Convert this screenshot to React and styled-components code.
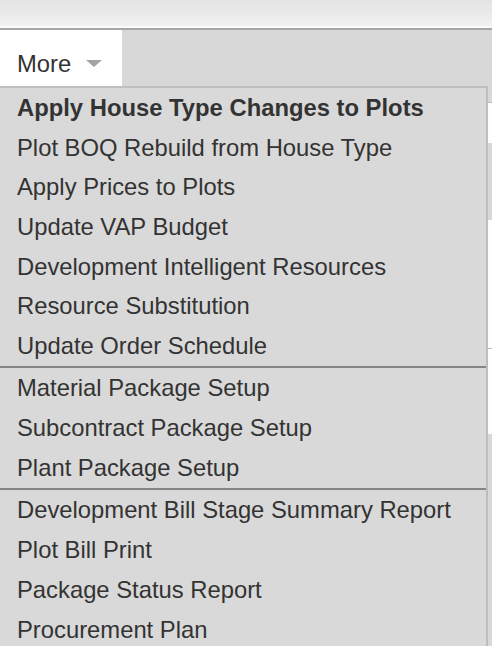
import styled, { createGlobalStyle } from "styled-components";

const GlobalStyle = createGlobalStyle`
  html, body {
    margin: 0;
    padding: 0;
    background: #d8d8d8;
    font-family: "Liberation Sans", Arial, Helvetica, sans-serif;
    overflow: hidden;
  }
`;

const Page = styled.div`
  width: 492px;
  height: 646px;
  overflow: hidden;
  background: #d8d8d8;
`;

const TopBar = styled.div`
  height: 26px;
  background: linear-gradient(#e3e3e3, #f1f1f1);
  border-bottom: 2px solid #fbfbfb;
`;

const TabStrip = styled.div`
  display: flex;
  height: 56px;
  border-top: 2px solid #a6a6a6;
  background: #d8d8d8;
`;

const Tab = styled.div`
  display: flex;
  align-items: center;
  gap: 15px;
  width: 122px;
  box-sizing: border-box;
  padding: 12px 0 0 17px;
  background: #fff;
  color: #333;
  font-size: 23.8px;
`;

const Caret = styled.span`
  width: 0;
  height: 0;
  border-left: 8px solid transparent;
  border-right: 8px solid transparent;
  border-top: 7px solid #a3a3a3;
  margin-top: -2px;
`;

const Content = styled.div`
  position: relative;
  height: 560px;
`;

const Row = styled.div`
  height: ${(p) => p.h}px;
  background: ${(p) => (p.white ? "#fdfdfd" : "#d8d8d8")};
  border-top: ${(p) => (p.line ? "1px solid #bcbcbc" : "none")};
`;

const Menu = styled.div`
  position: absolute;
  top: 0;
  left: 0;
  width: 486px;
  background: #d9d9d9;
  border-top: 2px solid #bfbfbf;
  border-right: 2px solid #bdbdbd;
`;

const Group = styled.div`
  & + & {
    border-top: 2px solid #858585;
  }
`;

const Item = styled.div`
  height: ${(p) => p.h || 40}px;
  line-height: ${(p) => p.h || 40}px;
  padding-left: 17px;
  color: #333;
  font-size: 23.8px;
  font-weight: ${(p) => (p.bold ? 700 : 400)};
  white-space: nowrap;
`;

const groups = [
  [
    "Apply House Type Changes to Plots",
    "Plot BOQ Rebuild from House Type",
    "Apply Prices to Plots",
    "Update VAP Budget",
    "Development Intelligent Resources",
    "Resource Substitution",
    "Update Order Schedule",
  ],
  ["Material Package Setup", "Subcontract Package Setup", "Plant Package Setup"],
  [
    "Development Bill Stage Summary Report",
    "Plot Bill Print",
    "Package Status Report",
    "Procurement Plan",
  ],
];

export default function App() {
  return (
    <Page>
      <GlobalStyle />
      <TopBar />
      <TabStrip>
        <Tab>
          More
          <Caret />
        </Tab>
      </TabStrip>
      <Content>
        <Row h={16} />
        <Row h={40} white line />
        <Row h={77} />
        <Row h={128} white />
        <Row h={85} white line />
        <Row h={200} />
        <Menu>
          {groups.map((g, gi) => (
            <Group key={gi}>
              {g.map((label, i) => (
                <Item key={label} bold={gi === 0 && i === 0} h={gi === 0 ? 39.7 : 40}>
                  {label}
                </Item>
              ))}
            </Group>
          ))}
        </Menu>
      </Content>
    </Page>
  );
}
